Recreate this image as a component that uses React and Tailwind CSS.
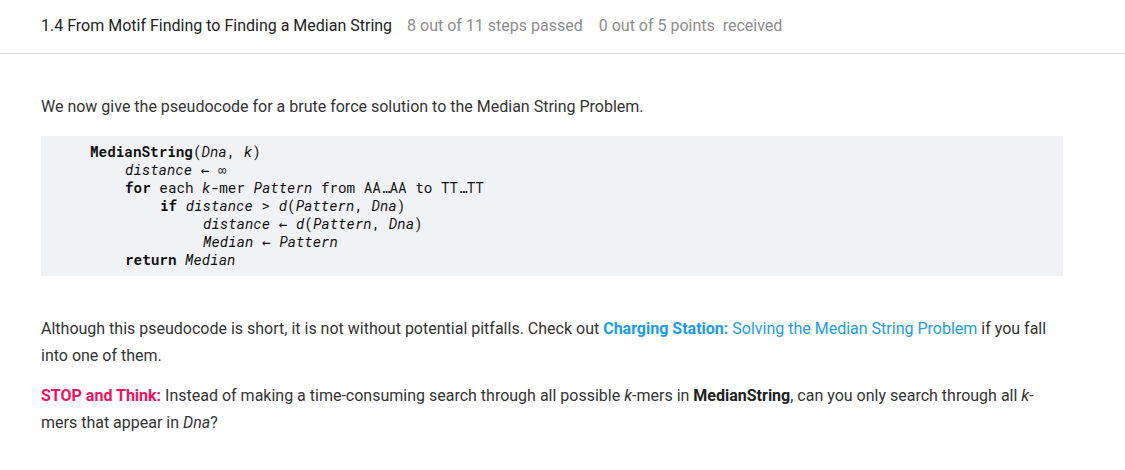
import React from "react";

const mono = "font-['Roboto_Mono','DejaVu_Sans_Mono','Liberation_Mono',monospace]";

const CodeLine = ({ indent = 0, children }) => (
  <div className="h-[18px] whitespace-pre leading-[18px]" style={{ paddingLeft: indent }}>
    {children}
  </div>
);

export default function App() {
  return (
    <div className="min-h-[470px] bg-white font-['Roboto','Liberation_Sans',sans-serif] text-[#333]">
      <div className="flex h-[54px] items-center border-b border-[#dcdcdc] px-[41px] pb-[1px] text-[16px]">
        <span className="text-[#222]">1.4 From Motif Finding to Finding a Median String</span>
        <span className="ml-[15px] text-[#8d8d8d]">8 out of 11 steps passed</span>
        <span className="ml-[16px] whitespace-pre text-[#8d8d8d]">0 out of 5 points  received</span>
      </div>

      <div className="w-[1063px] pl-[41px] pt-[40px]">
        <p className="text-[16px] leading-[26px]">
          We now give the pseudocode for a brute force solution to the Median String Problem.
        </p>

        <div className={`mt-[16px] h-[140px] w-[1022px] bg-[#f1f2f5] pl-[49px] pt-[7px] text-[14.3px] text-[#111] ${mono}`}>
          <CodeLine>
            <b>MedianString</b>(<i>Dna</i>, <i>k</i>)
          </CodeLine>
          <CodeLine indent={35}>
            <i>distance</i> ← ∞
          </CodeLine>
          <CodeLine indent={35}>
            <b>for</b> each <i>k</i>-mer <i>Pattern</i> from AA…AA to TT…TT
          </CodeLine>
          <CodeLine indent={70}>
            <b>if</b> <i>distance</i> &gt; <i>d</i>(<i>Pattern</i>, <i>Dna</i>)
          </CodeLine>
          <CodeLine indent={113}>
            <i>distance</i> ← <i>d</i>(<i>Pattern</i>, <i>Dna</i>)
          </CodeLine>
          <CodeLine indent={113}>
            <i>Median</i> ← <i>Pattern</i>
          </CodeLine>
          <CodeLine indent={35}>
            <b>return</b> <i>Median</i>
          </CodeLine>
        </div>

        <p className="mt-[39px] text-[16px] leading-[27px]">
          Although this pseudocode is short, it is not without potential pitfalls. Check out{" "}
          <span className="font-bold text-[#1a9bf0]">Charging Station:</span>{" "}
          <span className="text-[#1a9bf0]">Solving the Median String Problem</span> if you fall into one of them.
        </p>

        <p className="mt-[13px] text-[16px] leading-[27px]">
          <span className="font-bold text-[#f0125c]">STOP and Think:</span> Instead of making a time-consuming
          search through all possible <i>k</i>-mers in <b className="text-[#222]">MedianString</b>, can you only
          search through all <i>k</i>-mers that appear in <i>Dna</i>?
        </p>
      </div>
    </div>
  );
}
